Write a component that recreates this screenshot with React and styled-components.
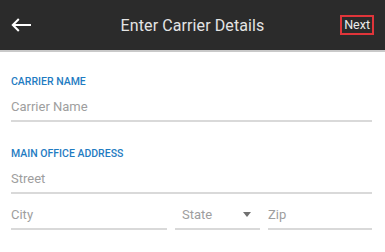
import React from "react";
import styled, { createGlobalStyle } from "styled-components";

const GlobalStyle = createGlobalStyle`
  html, body {
    margin: 0;
    padding: 0;
    background: #ffffff;
    font-family: Roboto, "Noto Sans", "Liberation Sans", sans-serif;
  }
`;

const Screen = styled.div`
  width: 385px;
  height: 252px;
  background: #ffffff;
  overflow: hidden;
`;

const Header = styled.header`
  height: 50px;
  background: #2b2b2b;
  border-bottom: 2px solid #c9c9c9;
  display: grid;
  grid-template-columns: 1fr auto 1fr;
  align-items: center;
  padding: 0 11px;
`;

const BackButton = styled.button`
  justify-self: start;
  display: flex;
  align-items: center;
  background: none;
  border: 0;
  padding: 0;
  cursor: pointer;
`;

const Title = styled.h1`
  margin: 0;
  font-size: 16px;
  font-weight: 400;
  color: #e4e4e4;
  letter-spacing: 0.1px;
`;

const NextButton = styled.button`
  justify-self: end;
  height: 20px;
  padding: 0 2px;
  border: 2px solid #e0353a;
  background: #2b2b2b;
  color: #ececec;
  font-family: inherit;
  font-size: 12.5px;
  line-height: 16px;
  cursor: pointer;
`;

const Form = styled.form`
  padding: 23px 13px 0 11px;
  display: flex;
  flex-direction: column;
`;

const Section = styled.section`
  display: flex;
  flex-direction: column;
  margin-bottom: ${(p) => p.$spacing || 0}px;
`;

const Label = styled.label`
  display: block;
  height: 14px;
  line-height: 14px;
  font-size: 10.5px;
  font-weight: 500;
  color: #1f7cc2;
  text-transform: uppercase;
  margin-bottom: 3px;
`;

const Input = styled.input`
  box-sizing: content-box;
  display: block;
  width: 100%;
  min-width: 0;
  height: 28px;
  padding: 0 ${(p) => p.$inset || 0}px;
  margin: 0;
  border: 0;
  border-bottom: 2px solid #d9d9d9;
  outline: none;
  background: transparent;
  font-family: inherit;
  font-size: 13px;
  color: #333;

  &::placeholder {
    color: #9e9e9e;
  }
`;

const Row = styled.div`
  display: grid;
  grid-template-columns: 156px 85px 1fr;
  column-gap: 8px;
  margin-top: 6px;
`;

const Select = styled.div`
  height: 28px;
  border-bottom: 2px solid #d9d9d9;
  display: flex;
  align-items: center;
  justify-content: space-between;
  padding: 0 9px 0 7px;
  font-size: 13px;
  color: #9e9e9e;
`;

const Caret = styled.span`
  width: 0;
  height: 0;
  border-left: 4.5px solid transparent;
  border-right: 4.5px solid transparent;
  border-top: 5px solid #707070;
`;

const ArrowIcon = () => (
  <svg width="20" height="14" viewBox="0 0 20 14" fill="none">
    <path
      d="M20 7H1.8M7.8 1L1.8 7l6 6"
      stroke="#ffffff"
      strokeWidth="2"
      strokeLinejoin="miter"
    />
  </svg>
);

export default function App() {
  return (
    <Screen>
      <GlobalStyle />
      <Header>
        <BackButton type="button" aria-label="Back">
          <ArrowIcon />
        </BackButton>
        <Title>Enter Carrier Details</Title>
        <NextButton type="button">Next</NextButton>
      </Header>
      <Form>
        <Section $spacing={25}>
          <Label>Carrier Name</Label>
          <Input placeholder="Carrier Name" />
        </Section>
        <Section>
          <Label>Main Office Address</Label>
          <Input placeholder="Street" />
          <Row>
            <Input placeholder="City" />
            <Select>
              State
              <Caret />
            </Select>
            <Input placeholder="Zip" />
          </Row>
        </Section>
      </Form>
    </Screen>
  );
}
